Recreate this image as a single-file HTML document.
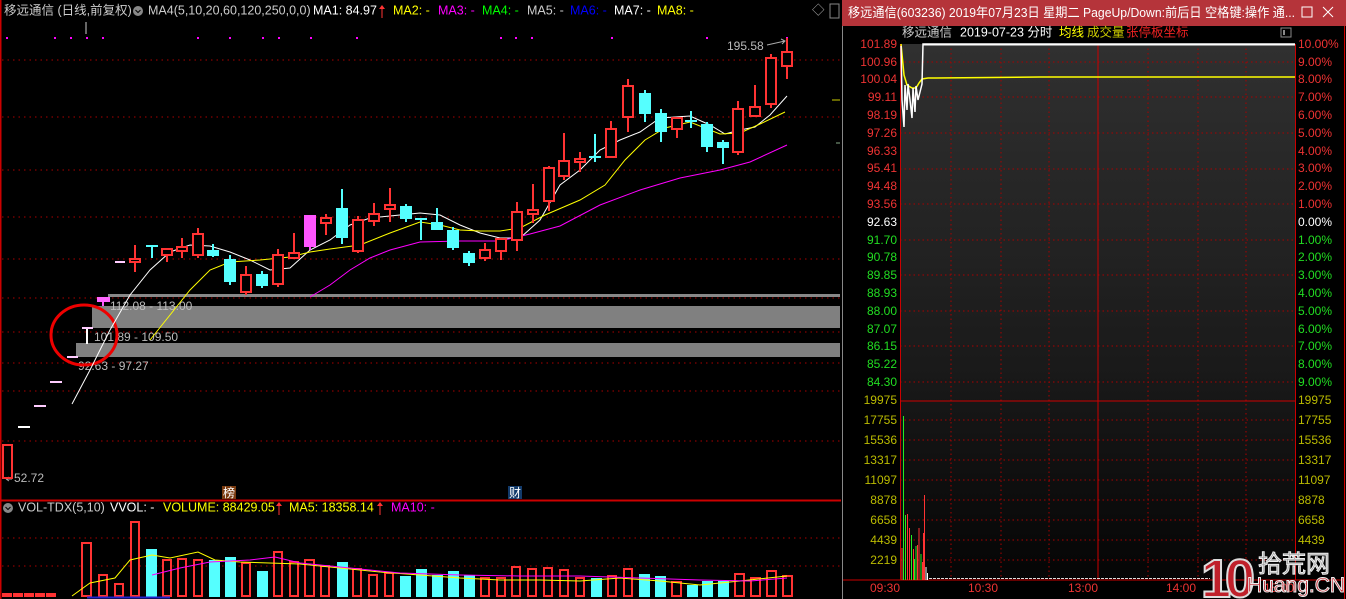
<!DOCTYPE html>
<html><head><meta charset="utf-8"><style>
html,body{margin:0;padding:0;background:#000;width:1346px;height:599px;overflow:hidden}
svg{display:block}
text{font-family:"Liberation Sans","Noto Sans CJK SC",sans-serif}
</style></head><body>
<svg width="1346" height="599" viewBox="0 0 1346 599" xmlns="http://www.w3.org/2000/svg">
<defs>
<linearGradient id="bg" x1="0" y1="0" x2="0" y2="1">
<stop offset="0" stop-color="#303030"/><stop offset="0.6" stop-color="#1a1a1a"/><stop offset="1" stop-color="#050505"/>
</linearGradient>
</defs>
<rect width="1346" height="599" fill="#000"/>
<line x1="0.5" y1="0" x2="0.5" y2="599" stroke="#c00" stroke-width="2"/>
<g font-size="12.5" dominant-baseline="middle">
<text x="4" y="11" fill="#ccc">移远通信 (日线,前复权)</text>
<circle cx="138" cy="11" r="5" fill="#888"/><path d="M135.5 10l2.5 2.5 2.5-2.5" stroke="#000" fill="none"/>
<text x="148" y="11" fill="#ccc">MA4(5,10,20,60,120,250,0,0)</text>
<text x="313" y="11" fill="#fff">MA1: 84.97</text>
<text x="393" y="11" fill="#ff0">MA2: -</text>
<text x="438" y="11" fill="#f0f">MA3: -</text>
<text x="482" y="11" fill="#0f0">MA4: -</text>
<text x="527" y="11" fill="#ccc">MA5: -</text>
<text x="570" y="11" fill="#00f">MA6: -</text>
<text x="614" y="11" fill="#fff">MA7: -</text>
<text x="657" y="11" fill="#ff0">MA8: -</text>
<text x="812" y="11" fill="#aaa">◇</text>
</g>
<line x1="382" y1="6" x2="382" y2="18" stroke="#f33"/><path d="M379 9l3-4 3 4" fill="#f33"/>
<rect x="830" y="4" width="9" height="14" fill="none" stroke="#888"/>
<line x1="86" y1="22" x2="86" y2="34" stroke="#ccc"/>
<g fill="#f0f">
<rect x="6" y="37" width="2" height="2"/><rect x="54" y="37" width="2" height="2"/><rect x="70" y="37" width="2" height="2"/><rect x="86" y="37" width="2" height="2"/><rect x="102" y="37" width="2" height="2"/><rect x="197" y="37" width="2" height="2"/><rect x="229" y="37" width="2" height="2"/><rect x="262" y="37" width="2" height="2"/><rect x="278" y="37" width="2" height="2"/><rect x="310" y="37" width="2" height="2"/><rect x="356" y="37" width="2" height="2"/><rect x="500" y="37" width="2" height="2"/><rect x="515" y="37" width="2" height="2"/><rect x="531" y="37" width="2" height="2"/><rect x="611" y="37" width="2" height="2"/><rect x="706" y="37" width="2" height="2"/><rect x="786" y="37" width="2" height="2"/>
</g>
<g stroke="#a00" stroke-dasharray="1.5 4" stroke-width="1">
<line x1="2" y1="60" x2="840" y2="60"/><line x1="2" y1="117" x2="840" y2="117"/><line x1="2" y1="170" x2="840" y2="170"/><line x1="2" y1="217" x2="840" y2="217"/><line x1="2" y1="259" x2="840" y2="259"/><line x1="2" y1="298" x2="840" y2="298"/><line x1="2" y1="332" x2="840" y2="332"/><line x1="2" y1="363" x2="840" y2="363"/><line x1="2" y1="391" x2="840" y2="391"/><line x1="2" y1="441" x2="840" y2="441"/>
<line x1="2" y1="538" x2="840" y2="538"/><line x1="2" y1="566" x2="840" y2="566"/>
</g>
<rect x="108" y="294" width="732" height="3" fill="#888"/>
<rect x="92" y="306" width="748" height="22" fill="#808080"/>
<rect x="76" y="343" width="764" height="14" fill="#808080"/>
<g font-size="12" fill="#bbb" dominant-baseline="middle">
<text x="110" y="307">112.08 - 113.00</text>
<text x="94" y="338">101.89 - 109.50</text>
<text x="78" y="367">92.63 - 97.27</text>
<text x="727" y="47">195.58</text>
<text x="14" y="479">52.72</text>
</g>
<path d="M767 45l18-4M781 39l4 2-3 3" stroke="#aaa" fill="none"/>
<path d="M6 479h6M6 479l3-2M6 479l3 2" stroke="#aaa" fill="none"/>
<g stroke-width="2">
<line x1="18" y1="427" x2="30" y2="427" stroke="#fff"/>
<line x1="34" y1="406" x2="46" y2="406" stroke="#fcf"/>
<line x1="50" y1="382" x2="62" y2="382" stroke="#fcf"/>
<line x1="67" y1="357" x2="78" y2="357" stroke="#fcf"/>
<line x1="87" y1="328" x2="87" y2="344" stroke="#fff"/>
<line x1="82" y1="328" x2="93" y2="328" stroke="#fcf"/>
<line x1="103" y1="298" x2="103" y2="306" stroke="#f5f"/>
<line x1="115" y1="262" x2="125" y2="262" stroke="#fcf"/>
</g>
<rect x="97" y="297" width="13" height="5" fill="#f6f"/>
<rect x="3" y="445" width="9" height="33" fill="none" stroke="#f33" stroke-width="2"/>
<ellipse cx="84" cy="335" rx="33" ry="30" fill="none" stroke="#e00" stroke-width="3"/>
<polyline fill="none" stroke="#fff" stroke-width="1" points="72,404 90,370 110,330 130,295 150,270 170,252 190,245 210,246 230,252 250,260 270,270 290,268 310,250 330,240 350,225 370,218 400,215 420,213 440,215 460,225 480,233 500,238 520,238 540,220 560,185 580,170 600,150 620,140 640,132 660,118 690,116 710,125 725,134 740,130 755,127 770,115 787,96"/>
<polyline fill="none" stroke="#ff0" stroke-width="1" points="150,340 170,315 190,290 210,270 230,262 260,260 290,257 310,252 330,249 360,245 390,233 420,222 440,225 460,230 480,231 500,231 520,228 545,215 580,200 605,185 625,160 645,140 665,128 690,122 720,134 740,133 760,124 785,112"/>
<polyline fill="none" stroke="#f0f" stroke-width="1" points="310,297 330,285 350,270 370,258 390,250 420,242 460,241 500,241 530,234 560,226 600,205 640,190 680,178 720,170 750,162 787,145"/>
<line x1="832" y1="100" x2="840" y2="100" stroke="#cc0"/><line x1="836" y1="143" x2="840" y2="143" stroke="#8a8"/>
<g stroke-width="2">
<g stroke="#ff3333" fill="#000">
<line x1="135" y1="245" x2="135" y2="272"/><rect x="130" y="259" width="10" height="3"/>
<line x1="167" y1="249" x2="167" y2="262"/><rect x="162" y="249" width="10" height="6"/>
<line x1="182" y1="238" x2="182" y2="258"/><rect x="177" y="247" width="10" height="4"/>
<line x1="198" y1="228" x2="198" y2="258"/><rect x="193" y="234" width="10" height="21"/>
<line x1="246" y1="266" x2="246" y2="295"/><rect x="241" y="275" width="10" height="17"/>
<line x1="278" y1="249" x2="278" y2="287"/><rect x="273" y="255" width="10" height="29"/>
<line x1="294" y1="233" x2="294" y2="258"/><rect x="289" y="253" width="10" height="5"/>
<line x1="326" y1="214" x2="326" y2="235"/><rect x="321" y="218" width="10" height="5"/>
<line x1="358" y1="216" x2="358" y2="253"/><rect x="353" y="220" width="10" height="31"/>
<line x1="374" y1="203" x2="374" y2="226"/><rect x="369" y="214" width="10" height="7"/>
<line x1="390" y1="188" x2="390" y2="222"/><rect x="385" y="205" width="10" height="4"/>
<line x1="485" y1="243" x2="485" y2="261"/><rect x="480" y="250" width="10" height="8"/>
<line x1="501" y1="238" x2="501" y2="260"/><rect x="496" y="239" width="10" height="12"/>
<line x1="517" y1="202" x2="517" y2="251"/><rect x="512" y="212" width="10" height="28"/>
<line x1="533" y1="184" x2="533" y2="223"/><rect x="528" y="210" width="10" height="4"/>
<line x1="549" y1="166" x2="549" y2="211"/><rect x="544" y="168" width="10" height="33"/>
<line x1="564" y1="133" x2="564" y2="180"/><rect x="559" y="161" width="10" height="15"/>
<line x1="580" y1="152" x2="580" y2="172"/><rect x="575" y="159" width="10" height="3"/>
<line x1="611" y1="121" x2="611" y2="157"/><rect x="606" y="129" width="10" height="28"/>
<line x1="628" y1="79" x2="628" y2="132"/><rect x="623" y="86" width="10" height="31"/>
<line x1="677" y1="117" x2="677" y2="138"/><rect x="672" y="118" width="10" height="11"/>
<line x1="738" y1="101" x2="738" y2="155"/><rect x="733" y="109" width="10" height="43"/>
<line x1="755" y1="85" x2="755" y2="116"/><rect x="750" y="107" width="10" height="9"/>
<line x1="771" y1="54" x2="771" y2="108"/><rect x="766" y="58" width="10" height="46"/>
<line x1="787" y1="38" x2="787" y2="79"/><rect x="782" y="52" width="10" height="14"/>
</g>
<g stroke="#55ffff" fill="#55ffff">
<line x1="152" y1="246" x2="152" y2="258"/><line x1="146" y1="246" x2="158" y2="246"/>
<line x1="213" y1="244" x2="213" y2="257"/><rect x="208" y="251" width="10" height="4"/>
<line x1="230" y1="255" x2="230" y2="285"/><rect x="225" y="260" width="10" height="21"/>
<line x1="262" y1="271" x2="262" y2="288"/><rect x="257" y="275" width="10" height="10"/>
<line x1="342" y1="189" x2="342" y2="244"/><rect x="337" y="209" width="10" height="28"/>
<line x1="406" y1="204" x2="406" y2="222"/><rect x="401" y="207" width="10" height="11"/>
<line x1="421" y1="218" x2="421" y2="240"/><line x1="415" y1="219" x2="427" y2="219"/>
<line x1="437" y1="208" x2="437" y2="230"/><rect x="432" y="223" width="10" height="6"/>
<line x1="453" y1="227" x2="453" y2="250"/><rect x="448" y="231" width="10" height="16"/>
<line x1="469" y1="251" x2="469" y2="266"/><rect x="464" y="254" width="10" height="8"/>
<line x1="595" y1="134" x2="595" y2="162"/><line x1="589" y1="157" x2="601" y2="157"/>
<line x1="645" y1="90" x2="645" y2="122"/><rect x="640" y="94" width="10" height="19"/>
<line x1="661" y1="109" x2="661" y2="142"/><rect x="656" y="114" width="10" height="17"/>
<line x1="691" y1="111" x2="691" y2="128"/><line x1="685" y1="121" x2="697" y2="121"/>
<line x1="707" y1="122" x2="707" y2="152"/><rect x="702" y="125" width="10" height="21"/>
<line x1="723" y1="140" x2="723" y2="164"/><rect x="718" y="143" width="10" height="4"/>
</g>
<line x1="310" y1="215" x2="310" y2="250" stroke="#f5f"/><rect x="305" y="216" width="10" height="30" fill="#ff55ff" stroke="#ff55ff"/>
</g>
<rect x="222" y="486" width="14" height="13" fill="#7a3b10"/><text x="223" y="497" font-size="12" fill="#fff">榜</text>
<rect x="508" y="486" width="14" height="13" fill="#123a6a"/><text x="509" y="497" font-size="12" fill="#fff">财</text>
<line x1="0" y1="500.5" x2="841" y2="500.5" stroke="#c00" stroke-width="2"/>
<g font-size="12.5" dominant-baseline="middle">
<circle cx="8" cy="508" r="5" fill="#888"/><path d="M5.5 507l2.5 2.5 2.5-2.5" stroke="#000" fill="none"/>
<text x="18" y="508" fill="#ccc">VOL-TDX(5,10)</text>
<text x="110" y="508" fill="#fff">VVOL: -</text>
<text x="163" y="508" fill="#ff0">VOLUME: 88429.05</text>
<text x="289" y="508" fill="#ff0">MA5: 18358.14</text>
<text x="391" y="508" fill="#f0f">MA10: -</text>
</g>
<line x1="279" y1="503" x2="279" y2="515" stroke="#f33"/><path d="M276 506l3-4 3 4" fill="#f33"/>
<line x1="380" y1="503" x2="380" y2="515" stroke="#f33"/><path d="M377 506l3-4 3 4" fill="#f33"/>
<g stroke-width="2">
<g fill="#000" stroke="#ff3333">
<rect x="3" y="594" width="8" height="2"/><rect x="14" y="594" width="8" height="2"/><rect x="25" y="594" width="8" height="2"/><rect x="36" y="594" width="8" height="2"/><rect x="47" y="594" width="8" height="2"/>
<rect x="82" y="543" width="9" height="53"/><rect x="99" y="575" width="8" height="21"/><rect x="115" y="584" width="8" height="12"/><rect x="131" y="522" width="8" height="74"/>
<rect x="163" y="560" width="8" height="36"/><rect x="178" y="559" width="8" height="37"/><rect x="194" y="560" width="8" height="36"/>
<rect x="242" y="563" width="8" height="33"/><rect x="274" y="552" width="8" height="44"/><rect x="290" y="562" width="8" height="34"/><rect x="305" y="560" width="9" height="36"/><rect x="321" y="566" width="8" height="30"/>
<rect x="353" y="569" width="8" height="27"/><rect x="369" y="575" width="8" height="21"/><rect x="385" y="573" width="8" height="23"/>
<rect x="481" y="578" width="8" height="18"/><rect x="497" y="578" width="8" height="18"/><rect x="512" y="567" width="8" height="29"/><rect x="528" y="569" width="8" height="27"/><rect x="544" y="568" width="8" height="28"/><rect x="560" y="570" width="8" height="26"/><rect x="576" y="578" width="8" height="18"/>
<rect x="608" y="576" width="8" height="20"/><rect x="624" y="569" width="8" height="27"/><rect x="672" y="582" width="9" height="14"/>
<rect x="735" y="574" width="9" height="22"/><rect x="751" y="578" width="9" height="18"/><rect x="767" y="571" width="9" height="25"/><rect x="783" y="576" width="9" height="20"/>
</g>
<g fill="#55ffff" stroke="none">
<rect x="146" y="549" width="11" height="48"/><rect x="209" y="560" width="11" height="37"/><rect x="225" y="557" width="11" height="40"/><rect x="257" y="571" width="11" height="26"/>
<rect x="337" y="562" width="11" height="35"/><rect x="400" y="576" width="11" height="21"/><rect x="416" y="569" width="11" height="28"/><rect x="432" y="575" width="11" height="22"/><rect x="448" y="571" width="11" height="26"/><rect x="464" y="575" width="11" height="22"/>
<rect x="591" y="578" width="11" height="19"/><rect x="639" y="574" width="11" height="23"/><rect x="655" y="576" width="11" height="21"/><rect x="687" y="585" width="11" height="12"/><rect x="702" y="581" width="11" height="16"/><rect x="718" y="581" width="11" height="16"/>
</g>
</g>
<polyline fill="none" stroke="#ff0" points="72,596 90,583 115,578 130,560 152,555 170,558 198,552 215,560 240,562 300,564 340,568 380,572 420,575 460,578 500,580 540,580 580,581 620,578 660,581 700,585 740,581 787,576"/>
<polyline fill="none" stroke="#f0f" points="152,575 180,568 210,562 250,560 275,557 300,563 340,567 400,573 460,575 520,576 580,576 640,578 700,580 750,581 787,578"/>
<line x1="87" y1="597.5" x2="170" y2="597.5" stroke="#22c" stroke-width="2"/>
<!-- RIGHT PANEL -->
<rect x="842" y="0" width="504" height="599" fill="#000"/>
<rect x="842" y="0" width="504" height="26" fill="#b5343a"/>
<text x="848" y="17" font-size="13" fill="#fff" textLength="447" lengthAdjust="spacingAndGlyphs">移远通信(603236) 2019年07月23日 星期二 PageUp/Down:前后日 空格键:操作 通...</text>
<rect x="1302" y="7" width="10" height="10" fill="none" stroke="#fff"/>
<path d="M1323 7l10 10M1333 7l-10 10" stroke="#fff"/>
<line x1="842.5" y1="26" x2="842.5" y2="599" stroke="#888"/>
<line x1="1344.5" y1="26" x2="1344.5" y2="599" stroke="#c00"/>
<g font-size="12.5" dominant-baseline="middle">
<text x="902" y="33" fill="#ccc">移远通信</text>
<text x="960" y="33" fill="#fff">2019-07-23 分时</text>
<text x="1059" y="33" fill="#ff0">均线</text>
<text x="1087" y="33" fill="#cc0">成交量</text>
<text x="1126" y="33" fill="#e22">张停板坐标</text>
</g>
<rect x="1281" y="28" width="10" height="9" fill="none" stroke="#888"/><rect x="1283" y="30" width="2" height="5" fill="#888"/>
<rect x="900" y="44" width="395" height="536" fill="url(#bg)"/>
<g stroke="#a00" stroke-dasharray="1.5 3">
<line x1="951" y1="44" x2="951" y2="580"/><line x1="1001" y1="44" x2="1001" y2="580"/><line x1="1049" y1="44" x2="1049" y2="580"/><line x1="1148" y1="44" x2="1148" y2="580"/><line x1="1198" y1="44" x2="1198" y2="580"/><line x1="1246" y1="44" x2="1246" y2="580"/>
<line x1="900" y1="62" x2="1295" y2="62"/><line x1="900" y1="97" x2="1295" y2="97"/><line x1="900" y1="133" x2="1295" y2="133"/><line x1="900" y1="169" x2="1295" y2="169"/><line x1="900" y1="204" x2="1295" y2="204"/><line x1="900" y1="240" x2="1295" y2="240"/><line x1="900" y1="275" x2="1295" y2="275"/><line x1="900" y1="311" x2="1295" y2="311"/><line x1="900" y1="346" x2="1295" y2="346"/><line x1="900" y1="382" x2="1295" y2="382"/>
<line x1="900" y1="420" x2="1295" y2="420"/><line x1="900" y1="440" x2="1295" y2="440"/><line x1="900" y1="460" x2="1295" y2="460"/><line x1="900" y1="480" x2="1295" y2="480"/><line x1="900" y1="500" x2="1295" y2="500"/><line x1="900" y1="520" x2="1295" y2="520"/><line x1="900" y1="540" x2="1295" y2="540"/><line x1="900" y1="560" x2="1295" y2="560"/>
</g>
<line x1="1098" y1="44" x2="1098" y2="580" stroke="#c00"/>
<line x1="900.5" y1="44" x2="900.5" y2="580" stroke="#c00"/>
<line x1="1295.5" y1="44" x2="1295.5" y2="580" stroke="#c00"/>
<line x1="900" y1="401" x2="1295" y2="401" stroke="#c00"/>
<line x1="843" y1="580" x2="1344" y2="580" stroke="#c00"/>
<polyline fill="none" stroke="#ff0" stroke-width="1.5" points="901,44 904,75 907,85 912,88 916,88 919,83 922,79 928,78 936,78 1040,77 1295,77"/>
<polyline fill="none" stroke="#fff" stroke-width="1.5" points="901,46 902,100 904,127 905,85 907,110 908,84 910,100 912,118 913,88 915,112 916,86 918,100 920,92 922,84 923,44 1295,44"/>
<line x1="923" y1="44.5" x2="1295" y2="44.5" stroke="#fff" stroke-width="2"/>
<g font-size="12" text-anchor="end" dominant-baseline="middle">
<g fill="#e33">
<text x="897" y="45">101.89</text><text x="897" y="63">100.96</text><text x="897" y="80">100.04</text><text x="897" y="98">99.11</text><text x="897" y="116">98.19</text><text x="897" y="134">97.26</text><text x="897" y="152">96.33</text><text x="897" y="169">95.41</text><text x="897" y="187">94.48</text><text x="897" y="205">93.56</text>
</g>
<text x="897" y="223" fill="#fff">92.63</text>
<g fill="#2d2">
<text x="897" y="241">91.70</text><text x="897" y="258">90.78</text><text x="897" y="276">89.85</text><text x="897" y="294">88.93</text><text x="897" y="312">88.00</text><text x="897" y="330">87.07</text><text x="897" y="347">86.15</text><text x="897" y="365">85.22</text><text x="897" y="383">84.30</text>
</g>
<g fill="#bb0">
<text x="897" y="401">19975</text><text x="897" y="421">17755</text><text x="897" y="441">15536</text><text x="897" y="461">13317</text><text x="897" y="481">11097</text><text x="897" y="501">8878</text><text x="897" y="521">6658</text><text x="897" y="541">4439</text><text x="897" y="561">2219</text>
</g>
</g>
<g font-size="12" dominant-baseline="middle">
<g fill="#e33">
<text x="1298" y="45">10.00%</text><text x="1298" y="63">9.00%</text><text x="1298" y="80">8.00%</text><text x="1298" y="98">7.00%</text><text x="1298" y="116">6.00%</text><text x="1298" y="134">5.00%</text><text x="1298" y="152">4.00%</text><text x="1298" y="169">3.00%</text><text x="1298" y="187">2.00%</text><text x="1298" y="205">1.00%</text>
</g>
<text x="1298" y="223" fill="#fff">0.00%</text>
<g fill="#2d2">
<text x="1298" y="241">1.00%</text><text x="1298" y="258">2.00%</text><text x="1298" y="276">3.00%</text><text x="1298" y="294">4.00%</text><text x="1298" y="312">5.00%</text><text x="1298" y="330">6.00%</text><text x="1298" y="347">7.00%</text><text x="1298" y="365">8.00%</text><text x="1298" y="383">9.00%</text>
</g>
<g fill="#bb0">
<text x="1298" y="401">19975</text><text x="1298" y="421">17755</text><text x="1298" y="441">15536</text><text x="1298" y="461">13317</text><text x="1298" y="481">11097</text><text x="1298" y="501">8878</text><text x="1298" y="521">6658</text><text x="1298" y="541">4439</text>
</g>
<g fill="#e33">
<text x="870" y="589">09:30</text><text x="968" y="589">10:30</text><text x="1068" y="589">13:00</text><text x="1166" y="589">14:00</text><text x="1264" y="589">15:00</text>
</g>
</g>
<g stroke-width="1">
<line x1="902" y1="548" x2="902" y2="580" stroke="#f33"/>
<line x1="903.5" y1="416" x2="903.5" y2="580" stroke="#2e2"/>
<line x1="905.5" y1="515" x2="905.5" y2="580" stroke="#2e2"/>
<line x1="907.5" y1="514" x2="907.5" y2="580" stroke="#f33"/>
<line x1="909.5" y1="528" x2="909.5" y2="580" stroke="#f33"/>
<line x1="911.5" y1="535" x2="911.5" y2="580" stroke="#2e2"/>
<line x1="913.5" y1="549" x2="913.5" y2="580" stroke="#f33"/>
<line x1="914.5" y1="559" x2="914.5" y2="580" stroke="#2e2"/>
<line x1="916" y1="546" x2="916" y2="580" stroke="#2e2"/>
<line x1="917.5" y1="545" x2="917.5" y2="580" stroke="#f33"/>
<line x1="919" y1="528" x2="919" y2="580" stroke="#f33"/>
<line x1="921" y1="554" x2="921" y2="580" stroke="#2e2"/>
<line x1="922.5" y1="562" x2="922.5" y2="580" stroke="#f33"/>
<line x1="923.5" y1="533" x2="923.5" y2="580" stroke="#f33"/>
<line x1="924.5" y1="495" x2="924.5" y2="580" stroke="#f33"/>
<line x1="926" y1="567" x2="926" y2="580" stroke="#fff"/>
<line x1="927.5" y1="573" x2="927.5" y2="580" stroke="#fff"/>
</g>
<line x1="929" y1="578.5" x2="1210" y2="578.5" stroke="#ddd" stroke-dasharray="3 1"/>
<text x="1201" y="597" font-size="54" font-weight="bold" fill="#c0202a" stroke="#ddd" stroke-width="2" letter-spacing="-6">10</text>
<text x="1258" y="572" font-size="24" fill="#999" stroke="#eee" stroke-width="1">拾荒网</text>
<text x="1247" y="592" font-size="21" fill="#c0202a" stroke="#eee" stroke-width="1">Huang.CN</text>
</svg>
</body></html>
